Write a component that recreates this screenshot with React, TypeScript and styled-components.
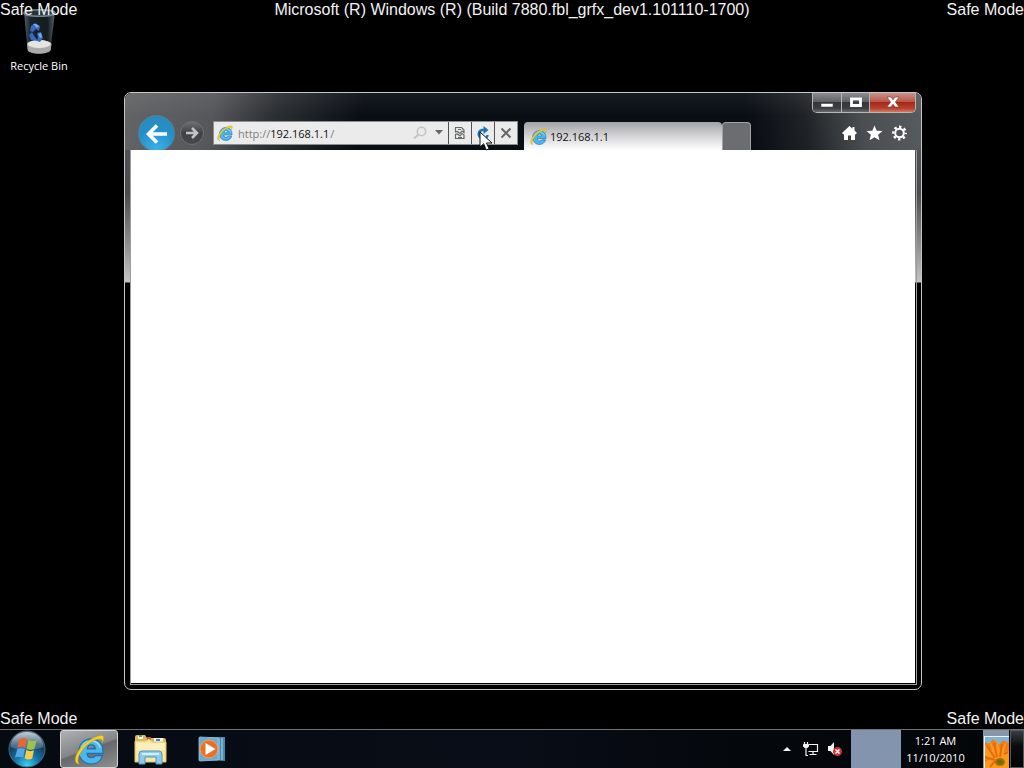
import React from "react";
import styled, { createGlobalStyle, css } from "styled-components";

const GlobalStyle = createGlobalStyle`
  *, *::before, *::after { box-sizing: border-box; }
  body { margin: 0; background: #000; }
  button, input { font: inherit; color: inherit; border: 0; padding: 0; margin: 0; background: none; border-radius: 0; }
  svg { display: block; flex: none; }
`;

const uiFont = `"Open Sans", "Noto Sans", sans-serif`;

const Desktop = styled.div`
  position: relative;
  display: flex;
  flex-direction: column;
  min-height: 100vh;
  background: #000;
  color: #fff;
  font: 11px/17px ${uiFont};
`;

const Watermark = styled.div<{ $overlay?: boolean }>`
  display: flex;
  justify-content: space-between;
  font: 16px/20px "Liberation Sans", Arial, sans-serif;
  color: #f2f2f2;
  ${(p) =>
    p.$overlay &&
    css`
      position: absolute;
      top: 0;
      left: 0;
      right: 0;
      z-index: 1;
      pointer-events: none;
    `}
`;

const WorkArea = styled.main`
  flex: 1;
  padding-top: 9px;
`;

const Shortcut = styled.button`
  display: flex;
  flex-direction: column;
  align-items: center;
  gap: 2px;
  width: 78px;
`;

const BrowserWindow = styled.section`
  position: absolute;
  top: 92px;
  right: 102px;
  bottom: 78px;
  left: 124px;
  display: flex;
  flex-direction: column;
  border: 1px solid #c4c6c8;
  border-radius: 7px;
  overflow: hidden;
  background: linear-gradient(#505256 57px, #4c4c4e 100px, #8c8c8c 150px, #c4c4c4 189px, #000 190px);
`;

const Chrome = styled.header`
  display: flex;
  flex-direction: column;
  height: 57px;
  background:
    linear-gradient(rgba(255, 255, 255, 0.06), transparent 40%),
    linear-gradient(100deg, #626466 0, #55575a 90px, #2c2f33 150px, #0a0e15 235px, transparent 236px),
    linear-gradient(80deg, #090d14 0, #090d14 78%, #1f2327 85%, #4b4e51 92%, #595c5f 100%);
`;

const CaptionRow = styled.div`
  display: flex;
  justify-content: flex-end;
  height: 20px;
  padding-right: 5px;
`;

const CaptionGroup = styled.div`
  display: flex;
  border: 1px solid #b4b6b8;
  border-top: 0;
  border-radius: 0 0 5px 5px;
  overflow: hidden;
`;

const CaptionButton = styled.button<{ $danger?: boolean }>`
  display: flex;
  align-items: center;
  justify-content: center;
  width: ${(p) => (p.$danger ? 46 : 28)}px;
  padding-bottom: 2px;
  background: ${(p) =>
    p.$danger
      ? "linear-gradient(#c9938a, #b9584a 45%, #a32a1a 50%, #b8402c 80%, #d07a62)"
      : "linear-gradient(#8b8d90, #606266 45%, #35373a 50%, #3c3f42 80%, #6a6c6f)"};
  & + & {
    border-left: 1px solid #b4b6b8;
  }
`;

const NavRow = styled.div`
  display: flex;
  align-items: center;
  height: 37px;
  padding: 2px 13px 0;
`;

const BackClip = styled.div`
  height: 35px;
  overflow: hidden;
  margin-right: 5px;
`;

const RoundButton = styled.button<{ $primary?: boolean }>`
  display: flex;
  align-items: center;
  justify-content: center;
  flex: none;
  border-radius: 50%;
  ${(p) =>
    p.$primary
      ? css`
          width: 37px;
          height: 37px;
          border: 1px solid #5d7f92;
          background: radial-gradient(circle at 50% 95%, #3fb0e6, #2190cb 55%, #3187b5 100%);
        `
      : css`
          width: 24px;
          height: 24px;
          margin-right: 9px;
          border: 1px solid #6d6f71;
          background: linear-gradient(#6d6f71, #3f4143 50%, #47494b);
        `}
`;

const AddressBar = styled.form`
  position: relative;
  display: flex;
  flex: 0 1 305px;
  height: 24px;
  margin-right: 6px;
  border: 1px solid #8c8e90;
  background: #ebebeb;
  color: #808080;
`;

const AddressField = styled.label`
  display: flex;
  flex: 1;
  align-items: center;
  min-width: 0;
  padding: 1px 0 0 3px;
`;

const Scheme = styled.span`
  margin-left: 5px;
`;

const UrlInput = styled.input`
  width: 60px;
  height: 17px;
  color: #111;
  outline: 0;
`;

const BarButton = styled.button<{ $width: number; $divided?: boolean }>`
  display: flex;
  align-items: center;
  justify-content: center;
  flex: none;
  width: ${(p) => p.$width}px;
  border-left: ${(p) => (p.$divided ? "1px solid #4f5153" : "0")};
`;

const Pointer = styled.svg`
  position: absolute;
  right: 24px;
  top: 9px;
  z-index: 2;
  pointer-events: none;
`;

const Tabs = styled.div`
  display: flex;
  align-self: flex-end;
  flex: 0 1 227px;
  height: 28px;
`;

const Tab = styled.button`
  display: flex;
  align-items: center;
  flex: 1;
  gap: 3px;
  padding-left: 6px;
  border-radius: 4px 4px 0 0;
  background: linear-gradient(#a2a3a6, #cfcfd1 45%, #fff);
  color: #111;
`;

const NewTab = styled.button`
  width: 29px;
  border: 1px solid #a0a2a5;
  border-bottom: 0;
  border-radius: 4px 4px 0 0;
  background: #6b6d71;
`;

const Tools = styled.div`
  display: flex;
  gap: 8px;
  margin-left: auto;
`;

const Page = styled.div`
  flex: 1;
  margin: 0 4px 4px 5px;
  border: solid #9c9c9c;
  border-width: 0 1px 1px;
  padding: 0 1px 1px 0;
  background: #fff content-box;
`;

const Taskbar = styled.footer`
  display: flex;
  align-items: stretch;
  height: 39px;
  border-top: 1px solid #6f7377;
  background: linear-gradient(90deg, #060a11, #090d17 50%, #04070b 74%, #020609);
`;

const TaskButton = styled.button<{ $width: number; $active?: boolean }>`
  display: flex;
  align-items: center;
  justify-content: center;
  flex: none;
  width: ${(p) => p.$width}px;
  ${(p) =>
    p.$active &&
    css`
      margin-left: 6px;
      border: 1px solid #d4d5d6;
      border-radius: 3px;
      background: linear-gradient(160deg, #b0b1b3, #848588 48%, #67686b 52%, #8e8f91);
    `}
`;

const Tray = styled.div`
  display: flex;
  align-items: center;
  gap: 8px;
  margin-left: auto;
  padding-right: 8px;
`;

const IconButton = styled.button`
  display: flex;
`;

const Band = styled.div`
  width: 50px;
  background: #8395ae;
`;

const Clock = styled.button`
  width: 82px;
  padding: 0 13px 0 0;
  text-align: center;
`;

const Photo = styled.div`
  width: 26px;
  padding: 6px 0 0 1px;
  background: #8797a8;
`;

const ShowDesktop = styled.button`
  width: 14px;
  margin-left: 1px;
  border: 1px solid #55585b;
  background: linear-gradient(#3a3f45, #0a0c0f 40%, #020304);
`;

function ExplorerLogo({ size }: { size: number }) {
  return (
    <svg width={size} height={size} viewBox="0 0 32 32" aria-hidden="true">
      <path
        d="M30 20H13.500c.3 3 2 4.500 4.600 4.500 1.900 0 3.200-.7 4-2.200h7.300C28 27.500 23.500 31 17.800 31 10.500 31 5 25.500 5 18S10.500 5 17.800 5C25.500 5 30.500 10.500 30 20zM13.700 15.300h8.400c-.3-2.600-1.900-4-4.200-4s-3.900 1.500-4.200 4z"
        fill="#4db7ec"
        stroke="#1b6fb2"
        strokeWidth="1.200"
      />
      <path d="M7.500 16C8.500 10.500 12.500 7.500 17.500 7.200c5 0 8.500 2.800 9.700 7" fill="none" stroke="#a5e0f9" strokeWidth="1.400" />
      <path
        d="M5.500 31C-2 31 1 19 10.500 10.500 18.500 3.400 29-.8 30.500 2.800c.8 2-.5 4.500-1.800 6.500.6-2.600.3-4-1.700-4.100C22 5 13.500 10 8.500 17 4 23 3 28.500 5.500 31z"
        fill="#f5cf23"
        stroke="#c29a16"
        strokeWidth="0.6"
      />
    </svg>
  );
}

function RecycleBin() {
  return (
    <svg width="34" height="46" viewBox="0 0 34 46" aria-hidden="true">
      <defs>
        <linearGradient id="bin" x2="1">
          <stop offset="0" stopColor="#55626a" />
          <stop offset=".2" stopColor="#1b2429" />
          <stop offset=".75" stopColor="#151b1f" />
          <stop offset="1" stopColor="#59636a" />
        </linearGradient>
      </defs>
      <path d="M2 3 5.500 40c1 6 21 6 23 0L33 3z" fill="url(#bin)" />
      <ellipse cx="17.500" cy="4" rx="15.500" ry="3.200" fill="#26333a" stroke="#738690" strokeWidth="1.600" />
      <path d="M5 35c1-5 23-5 24.500 0l-.8 6c-2 5-21.500 5-23 0z" fill="#aaa" />
      <ellipse cx="17.200" cy="35" rx="11.500" ry="4" fill="#e6e5e1" />
      <path d="m9 17 4-3 5 3-1 5-3-2-3 3-3-1zM7 26l3-3 3 5 3 4-7-1zM15 24l4-1 2 6-3 4-3-1 1-4z" fill="#3569c2" />
      <path d="m11 15 3 0 3 2-2 2zM16 25l3-1 1 4-2 1z" fill="#7aa8e8" />
    </svg>
  );
}

function StartOrb() {
  return (
    <svg width="38" height="38" viewBox="0 0 38 38" aria-hidden="true">
      <defs>
        <radialGradient id="orb" cx=".5" cy=".95" r=".95">
          <stop offset="0" stopColor="#39d2f5" />
          <stop offset=".35" stopColor="#1675a8" />
          <stop offset=".7" stopColor="#143a5a" />
          <stop offset="1" stopColor="#5a7285" />
        </radialGradient>
        <linearGradient id="shine" x2="0" y2="1">
          <stop offset="0" stopColor="#d3dde4" stopOpacity=".85" />
          <stop offset="1" stopColor="#a1b4c0" stopOpacity=".25" />
        </linearGradient>
      </defs>
      <circle cx="19" cy="19" r="18" fill="url(#orb)" stroke="#47697c" />
      <path d="M2.500 17C3 7 11 2 19 2s16 5 16.500 15c-9 4-24 4-33 0z" fill="url(#shine)" />
      <path d="M11.500 9c3-1.500 5-1.200 7.500.3L17.300 18c-2.600-1.500-5-1.700-7.700-.5z" fill="#ea6534" />
      <path d="M20.300 10c2.700 1.400 5 1.400 8.400.2l-2.300 8.600c-2.800 1.300-5.100 1-7.700-.4z" fill="#9bc349" />
      <path d="M9.300 19c2.700-1.300 5-1 7.600.5l-1.800 8.300c-2.600-1.400-4.900-1.600-8-.3z" fill="#56a8e4" />
      <path d="M18.300 20c2.600 1.400 5 1.500 7.700.3l-1.800 8.300c-2.800 1.300-5 1-7.600-.4z" fill="#fbcb42" />
    </svg>
  );
}

function FolderIcon() {
  return (
    <svg width="34" height="32" viewBox="0 0 34 32" aria-hidden="true">
      <path d="M1 29V4q0-2 2-2h8l2 3h17q2 0 2 2v22z" fill="#d7b758" />
      <path d="M4 3h5v3H4zM20 5h9v4h-9z" fill="#f8f8ef" />
      <path d="M5 2h3v2H5z" fill="#4ca63b" />
      <path d="M13 4h4v3h-4z" fill="#ce4e30" />
      <path d="M22 6h4v2h-4z" fill="#477fc1" />
      <path d="M1 8h11l3-2 4 3h13v20H1z" fill="#f7e7a0" stroke="#dfc36b" />
      <path d="M2 10h29v7H2z" fill="#fbf0bd" />
      <path d="M5 31V21q0-3 3-3h17q3 0 3 3v10h-6v-7H11v7z" fill="#8ecbea" stroke="#4998c7" />
      <path d="M8 20h17v2H8z" fill="#d4effa" />
    </svg>
  );
}

function MediaIcon() {
  return (
    <svg width="28" height="26" viewBox="0 0 28 26" aria-hidden="true">
      <path d="m9 1 18 0v24l-18-1z" fill="#4a87ae" />
      <path d="M24 2v22M21 2v22" stroke="#9bd0ea" strokeWidth="1.200" />
      <path d="M1 2q0-1 1-1l18 1v22L2 25q-1 0-1-1z" fill="#6cabd0" stroke="#91c8e4" strokeWidth=".8" />
      <circle cx="11" cy="13" r="9" fill="#e8702b" stroke="#f2a36b" />
      <path d="m7.500 7 10 6-10 6z" fill="#fff" />
    </svg>
  );
}

function NetworkIcon() {
  return (
    <svg width="16" height="16" viewBox="0 0 16 16" fill="none" stroke="#f3f3f3" aria-hidden="true">
      <path d="M6 3.500h8.500v7H5.500M10 11v2M6.500 13.500h7" strokeWidth="1.200" />
      <path d="M1.500 1v3M4.500 1v3M3 6v8.500h2" strokeWidth="1.200" />
      <path d="M.5 3.500h5v2l-1 1h-3l-1-1z" fill="#f3f3f3" />
    </svg>
  );
}

function MutedIcon() {
  return (
    <svg width="16" height="16" viewBox="0 0 16 16" aria-hidden="true">
      <path d="M1 5h2.500L7 1v13l-3.500-4H1z" fill="#f3f3f3" />
      <circle cx="10.500" cy="10.500" r="4.500" fill="#cf3032" />
      <path d="m8.500 8.500 4 4m0-4-4 4" stroke="#fff" strokeWidth="1.500" />
    </svg>
  );
}

function Sunflower() {
  return (
    <svg width="25" height="32" viewBox="0 0 25 32" aria-hidden="true">
      <path d="M0 0h25v32H0z" fill="#f07d16" />
      <path d="M0 0h25v7l-6-3-4 5-6-6-4 5-5-3z" fill="#7db4dd" />
      <path d="m0 8 8 7-3-11 7 11 1-13 3 13 7-10-3 11 5-1v17H0v-6l8-3-8-4z" fill="#f99a1d" />
      <path d="m3 10 8 12M10 7l3 14M18 8l-2 13M1 21l10 3M6 31l5-6M20 18l4-2" stroke="#e9680e" strokeWidth="2" />
      <ellipse cx="16" cy="26" rx="5" ry="4" fill="#9a700d" />
      <ellipse cx="16" cy="26" rx="3" ry="2" fill="#7d640a" />
      <path d="M0 .5h25M.5 0v32" stroke="#eef3f6" />
    </svg>
  );
}

export default function App() {
  return (
    <>
      <GlobalStyle />
      <Desktop>
        <Watermark $overlay>
          <span>Safe Mode</span>
          <span>Microsoft (R) Windows (R) (Build 7880.fbl_grfx_dev1.101110-1700)</span>
          <span>Safe Mode</span>
        </Watermark>

        <WorkArea>
          <Shortcut>
            <RecycleBin />
            Recycle Bin
          </Shortcut>
        </WorkArea>

        <BrowserWindow aria-label="192.168.1.1">
          <Chrome>
            <CaptionRow>
              <CaptionGroup>
                <CaptionButton aria-label="Minimize">
                  <svg width="14" height="16" viewBox="0 0 14 16">
                    <path d="M1 9.500h12v3.500H1z" fill="#fff" stroke="#44474a" strokeWidth=".6" />
                  </svg>
                </CaptionButton>
                <CaptionButton aria-label="Maximize">
                  <svg width="14" height="16" viewBox="0 0 14 16">
                    <path d="M2.500 5h9v6.500h-9z" fill="none" stroke="#fff" strokeWidth="2.800" />
                    <path d="M4.500 7h5v2.500h-5z" fill="none" stroke="#44474a" strokeWidth=".8" />
                  </svg>
                </CaptionButton>
                <CaptionButton $danger aria-label="Close">
                  <svg width="14" height="16" viewBox="0 0 14 16">
                    <path d="M1 3h4l2 2.800L9 3h4L9.400 8l3.600 5H9l-2-2.800L5 13H1l3.600-5z" fill="#fff" stroke="#6b3a34" strokeWidth=".6" />
                  </svg>
                </CaptionButton>
              </CaptionGroup>
            </CaptionRow>
            <NavRow>
              <BackClip>
                <RoundButton $primary aria-label="Back">
                  <svg width="24" height="22" viewBox="0 0 24 22" fill="none" stroke="#fff" strokeWidth="3.600">
                    <path d="M4 11h18M12 2.500 3.500 11l8.500 8.500" />
                  </svg>
                </RoundButton>
              </BackClip>
              <RoundButton aria-label="Forward">
                <svg width="14" height="14" viewBox="0 0 14 14" fill="none" stroke="#c2c3c4" strokeWidth="2.600">
                  <path d="M1 7h11M7 2l5 5-5 5" />
                </svg>
              </RoundButton>
              <AddressBar onSubmit={(e) => e.preventDefault()}>
                <AddressField>
                  <ExplorerLogo size={16} />
                  <Scheme>http://</Scheme>
                  <UrlInput aria-label="Address" defaultValue="192.168.1.1" />
                  <span>/</span>
                </AddressField>
                <BarButton type="button" $width={20} aria-label="Search">
                  <svg width="16" height="16" viewBox="0 0 16 16" fill="none" stroke="#c3c4c5">
                    <circle cx="9.500" cy="6.500" r="4.200" strokeWidth="1.600" />
                    <path d="m6.500 9.500-4.500 4" strokeWidth="2" />
                  </svg>
                </BarButton>
                <BarButton type="button" $width={18} aria-label="Show address history">
                  <svg width="8" height="5" viewBox="0 0 8 5">
                    <path d="M0 0h8L4 4.500z" fill="#66686a" />
                  </svg>
                </BarButton>
                <BarButton type="button" $width={23} $divided aria-label="Compatibility view">
                  <svg width="12" height="14" viewBox="0 0 12 14" fill="none" stroke="#66686a" strokeWidth="1.200">
                    <path d="M1.500 6V1.500h6l2.500 2.500v2.500L8 5 6 7.500 3.500 5.500zM1.500 8.500v4h8.500V9L8 7.500 6 10 3.500 8zM4 3.500h3M4 11.500h4" />
                  </svg>
                </BarButton>
                <BarButton type="button" $width={23} $divided aria-label="Refresh">
                  <svg width="14" height="14" viewBox="0 0 14 14">
                    <path d="M9 4H6.500a4 4 0 0 0-1 7.800M10 12a4 4 0 0 0 1.500-3" fill="none" stroke="#1c74bd" strokeWidth="2.400" />
                    <path d="m7.500 0 5 4-5 4z" fill="#1c74bd" />
                  </svg>
                </BarButton>
                <BarButton type="button" $width={23} $divided aria-label="Stop">
                  <svg width="12" height="12" viewBox="0 0 12 12">
                    <path d="m1.500 1.500 9 9m0-9-9 9" stroke="#66686a" strokeWidth="2" />
                  </svg>
                </BarButton>
                <Pointer width="14" height="20" viewBox="0 0 14 20">
                  <path d="M1 1v15l3.700-3.300L7.200 19l2.900-1.200L7.500 12H13z" fill="#fff" stroke="#111" />
                </Pointer>
              </AddressBar>
              <Tabs>
                <Tab>
                  <ExplorerLogo size={17} />
                  192.168.1.1
                </Tab>
                <NewTab aria-label="New tab" />
              </Tabs>
              <Tools>
                <IconButton aria-label="Home">
                  <svg width="17" height="16" viewBox="0 0 17 16">
                    <path d="M8.500 1 1 8l1.500 1.500.5-.5v6h4v-4.500h3V15h4V9l.5.500L16 8l-2.500-2.400V2h-2v1.700z" fill="#fff" />
                  </svg>
                </IconButton>
                <IconButton aria-label="Favorites">
                  <svg width="17" height="16" viewBox="0 0 17 16">
                    <path d="m8.500.5 2.200 5.200 5.800.4-4.400 3.700 1.400 5.500-5-3-5 3 1.400-5.500L.5 6.100l5.800-.4z" fill="#fff" />
                  </svg>
                </IconButton>
                <IconButton aria-label="Tools">
                  <svg width="17" height="16" viewBox="0 0 17 16" fill="none" stroke="#fff">
                    <circle cx="8.500" cy="8" r="4.300" strokeWidth="2" />
                    <circle cx="8.500" cy="8" r="6.200" strokeWidth="2.400" strokeDasharray="2.400 2.470" strokeDashoffset="1.200" />
                  </svg>
                </IconButton>
              </Tools>
            </NavRow>
          </Chrome>
          <Page />
        </BrowserWindow>

        <Watermark>
          <span>Safe Mode</span>
          <span>Safe Mode</span>
        </Watermark>

        <Taskbar>
          <TaskButton $width={54} aria-label="Start">
            <StartOrb />
          </TaskButton>
          <TaskButton $width={58} $active aria-label="Internet Explorer">
            <ExplorerLogo size={31} />
          </TaskButton>
          <TaskButton $width={66} aria-label="Windows Explorer">
            <FolderIcon />
          </TaskButton>
          <TaskButton $width={56} aria-label="Windows Media Player">
            <MediaIcon />
          </TaskButton>
          <Tray>
            <IconButton aria-label="Show hidden icons">
              <svg width="14" height="6" viewBox="0 0 14 6">
                <path d="m2 5 4-4 4 4z" fill="#f3f3f3" />
              </svg>
            </IconButton>
            <IconButton aria-label="Network">
              <NetworkIcon />
            </IconButton>
            <IconButton aria-label="Volume muted">
              <MutedIcon />
            </IconButton>
          </Tray>
          <Band />
          <Clock>
            1:21 AM
            <br />
            11/10/2010
          </Clock>
          <Photo>
            <Sunflower />
          </Photo>
          <ShowDesktop aria-label="Show desktop" />
        </Taskbar>
      </Desktop>
    </>
  );
}
